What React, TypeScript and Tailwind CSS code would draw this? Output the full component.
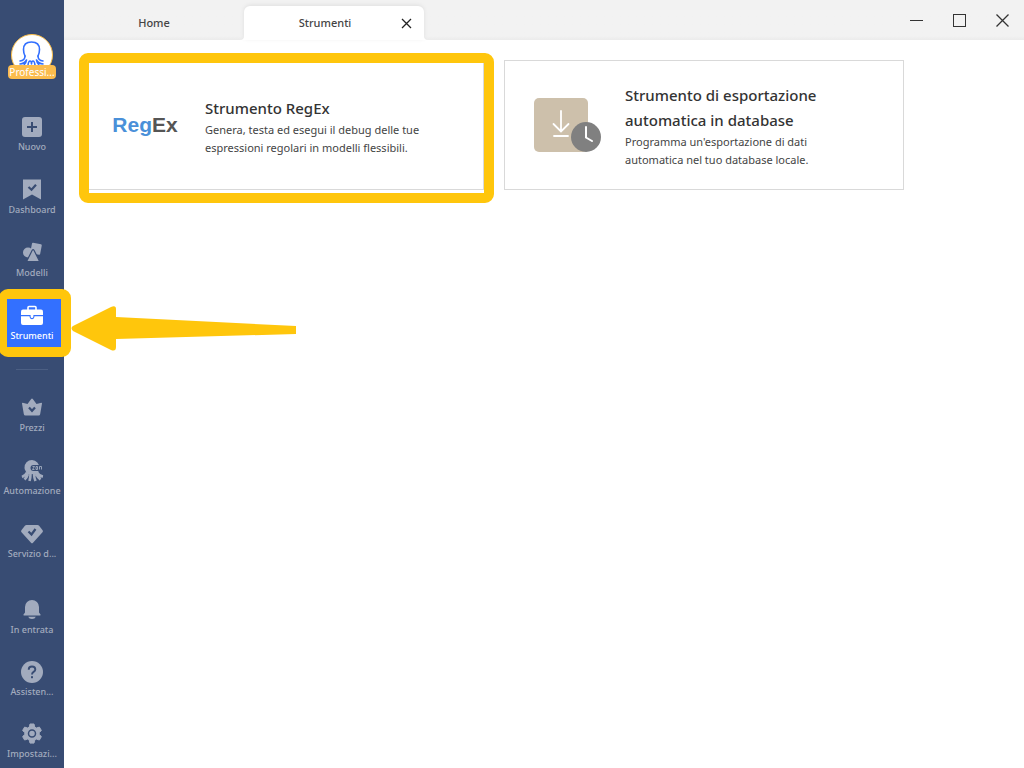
import React from 'react';
import { clsx } from 'clsx';

interface NavItem {
  label: string;
  icon: React.ReactNode;
  active?: boolean;
}

function Icon({ children }: { children: React.ReactNode }) {
  return (
    <svg width="24" height="24" viewBox="0 0 24 24" fill="currentColor" aria-hidden="true">
      {children}
    </svg>
  );
}

const NAVY = '#384c73';

const mainItems: NavItem[] = [
  {
    label: 'Nuovo',
    icon: (
      <Icon>
        <rect x="2" y="2" width="20" height="20" rx="3" />
        <path d="M12 7v10M7 12h10" stroke={NAVY} strokeWidth="2" />
      </Icon>
    ),
  },
  {
    label: 'Dashboard',
    icon: (
      <Icon>
        <path d="M3 1.500h18v20l-9-5-9 5z" />
        <path d="M8.500 9l3 2.800 4.500-5" fill="none" stroke={NAVY} strokeWidth="2.200" />
      </Icon>
    ),
  },
  {
    label: 'Modelli',
    icon: (
      <Icon>
        <rect x="11" y="2.500" width="10" height="10.500" rx="1" transform="rotate(11 16 8)" />
        <circle cx="8" cy="11.500" r="5" />
        <path d="M12.200 9.300q.9-1.400 1.800 0l5 10q.6 1.300-.8 1.300H8q-1.400 0-.8-1.300z" stroke={NAVY} strokeWidth="1.200" />
      </Icon>
    ),
  },
  {
    label: 'Strumenti',
    active: true,
    icon: (
      <Icon>
        <path d="M8 6V3.500q0-1 1-1h6q1 0 1 1V6" fill="none" stroke="currentColor" strokeWidth="1.600" />
        <path d="M3 5.500h18q2 0 2 2V11H1V7.500q0-2 2-2z" />
        <path d="M1 12.200h8.500q.3 3 2.500 3t2.500-3H23V19q0 2-2 2H3q-2 0-2-2z" />
        <path d="M10.600 11h2.800v1.500q0 1.500-1.400 1.500t-1.400-1.500z" />
      </Icon>
    ),
  },
];

const productItems: NavItem[] = [
  {
    label: 'Prezzi',
    icon: (
      <Icon>
        <path d="M12 2.500q.5 0 .8.500l3.700 5 4.800-1.300q.9 0 .7.900L20.200 18q-.2 1.500-1.700 1.500h-13q-1.500 0-1.700-1.500L2 7.600q-.2-.9.700-.9L7.500 8l3.700-5q.3-.5.8-.5z" />
        <path d="M9 11.500l3 3.300 3-3.300" fill="none" stroke={NAVY} strokeWidth="2.200" />
      </Icon>
    ),
  },
  {
    label: 'Automazione',
    icon: (
      <Icon>
        <path d="M12 1a7.500 7.500 0 0 1 7.300 8c0 2-1.300 3.500-1.300 6H6.500c0-2.500-2-4-2-6A7.500 7.500 0 0 1 12 1z" />
        <path d="M7 13.500q-1.500 3-5 4.500M8 15q-1 3-3.500 5.500M10.500 15q0 3.500-1 7M14 15q.2 4 1.500 7M16 15q1.500 3 4.500 5.500M17 13.500q2 3.500 6 4" fill="none" stroke="currentColor" strokeWidth="2.600" />
        <rect x="10.500" y="6" width="13" height="6" rx="3" fill={NAVY} />
        <path d="M12.500 7.500h2l-2 3h2M16 7.500v3h1.500v-3zM19.500 10.500v-3h2v3" fill="none" stroke="currentColor" strokeWidth="0.900" />
      </Icon>
    ),
  },
  {
    label: 'Servizio d...',
    icon: (
      <Icon>
        <path d="M6.500 3h11q1 0 1.600.8l3.500 4.500q.8 1-.1 2L13 20.800q-1 1-2 0L1.500 10.300q-.9-1-.1-2l3.500-4.500Q5.500 3 6.500 3z" />
        <path d="M8.500 9.500l3 3L15.500 7" fill="none" stroke={NAVY} strokeWidth="2.200" />
      </Icon>
    ),
  },
];

const footerItems: NavItem[] = [
  {
    label: 'In entrata',
    icon: (
      <Icon>
        <path d="M12 2a7 7 0 0 1 7 7v5.500l1.500 2q.5 1-.6 1H4.100q-1.100 0-.6-1l1.500-2V9a7 7 0 0 1 7-7z" />
        <path d="M8.200 18.700h7.600Q15 21 12 21t-3.800-2.300z" />
      </Icon>
    ),
  },
  {
    label: 'Assisten...',
    icon: (
      <Icon>
        <circle cx="12" cy="12" r="11" />
        <path d="M8.700 9.700Q8.700 6.500 12 6.500t3.300 2.900q0 1.400-1.700 2.500-1.600 1-1.600 2.600" fill="none" stroke={NAVY} strokeWidth="1.900" />
        <rect x="11" y="16.200" width="2" height="2" fill={NAVY} />
      </Icon>
    ),
  },
  {
    label: 'Impostazi...',
    icon: (
      <Icon>
        <path d="M10 2h4l.7 3 1.700 1 3-.9 2 3.400-2.200 2.100v1.900l2.200 2.100-2 3.400-3-.9-1.700 1-.7 3h-4l-.7-3-1.700-1-3 .9-2-3.400 2.200-2.100v-1.900L2.600 8.500l2-3.400 3 .9 1.700-1z" stroke="currentColor" strokeLinejoin="round" />
        <circle cx="12" cy="11.500" r="3.500" fill="none" stroke={NAVY} strokeWidth="1.500" />
      </Icon>
    ),
  },
];

function NavButton({ item }: { item: NavItem }) {
  return (
    <button
      className={clsx(
        'relative flex w-full flex-col items-center',
        item.active ? 'text-white' : 'text-[#a2abbe]'
      )}
    >
      {item.active && (
        <span className="absolute -top-[15px] -right-[7px] -bottom-[14px] -left-px rounded-[9px] border-[10px] border-l-[8px] border-[#ffc60c] bg-[#3370ff]" />
      )}
      <span className="relative">{item.icon}</span>
      <span className="relative text-[9px] leading-[15px] font-medium whitespace-nowrap">{item.label}</span>
    </button>
  );
}

function NavGroup({ items, className }: { items: NavItem[]; className?: string }) {
  return (
    <div className={clsx('flex flex-col', className)}>
      {items.map((item) => (
        <NavButton key={item.label} item={item} />
      ))}
    </div>
  );
}

function Sidebar() {
  return (
    <aside className="relative z-10 w-16 shrink-0 bg-[#384c73] pt-[34px]">
      <div className="flex flex-col items-center">
        <div className="h-[42px] w-[42px] overflow-hidden rounded-full border border-[#fbbf4c] bg-white">
          <svg width="40" height="40" viewBox="0 0 40 40" fill="none" stroke="#3370ff" strokeWidth="1.600" strokeLinecap="round" strokeLinejoin="round" aria-hidden="true">
            <path d="M13 21q-1.500-3-1.500-6.500Q11.500 7 19.500 7t8 7.500q0 3.500-1.500 6.500" />
            <path d="M13 21q0 4.500-5 5M26 21q0 4.500 5 5M8 29q4.500-.5 6.500-4-.5 3-2.500 5M31 29q-4.500-.5-6.500-4 .5 3 2.500 5M16 30q.5-4 2-4t1.500 3q0-3 1.500-3t2 4" />
          </svg>
        </div>
        <span className="-mt-[11px] w-12 rounded bg-[#fbbc4d] text-center text-[10px] leading-[14px] text-white">
          Professi...
        </span>
      </div>
      <nav className="pt-9">
        <NavGroup items={mainItems} className="gap-6" />
        <hr className="mx-4 my-[26px] border-[#4c5f83]" />
        <NavGroup items={productItems} className="gap-6" />
        <NavGroup items={footerItems} className="mt-[37px] gap-[23px]" />
      </nav>
    </aside>
  );
}

function TitleBar() {
  return (
    <header className="flex h-10 items-end justify-between bg-linear-to-b from-[#f2f2f2] from-90% to-[#ebebeb] text-[11px] font-medium text-[#444]">
      <div className="flex items-end" role="tablist">
        <button role="tab" aria-selected="false" className="h-[34px] w-[180px]">
          Home
        </button>
        <div className="relative flex h-[34px] w-[180px] items-center justify-center rounded-t-md bg-white shadow-[0_-1px_4px_#00000014]">
          <svg className="absolute bottom-0 -left-1" width="4" height="4" aria-hidden="true">
            <path d="M4 0v4H0q4 0 4-4z" fill="#fff" />
          </svg>
          <svg className="absolute -right-1 bottom-0" width="4" height="4" aria-hidden="true">
            <path d="M0 0v4h4Q0 4 0 0z" fill="#fff" />
          </svg>
          <button role="tab" aria-selected="true" className="h-full w-full pr-[18px]">
            Strumenti
          </button>
          <button aria-label="Chiudi scheda" className="absolute right-3 text-[#222]">
            <svg width="11" height="11" viewBox="0 0 11 11" stroke="currentColor" strokeWidth="1.300" aria-hidden="true">
              <path d="M1 1l9 9M10 1l-9 9" />
            </svg>
          </button>
        </div>
      </div>
      <div className="flex h-10 items-center gap-[30px] pr-[15px] text-[#333]">
        <button aria-label="Riduci a icona">
          <svg width="13" height="13" viewBox="0 0 13 13" stroke="currentColor" aria-hidden="true">
            <path d="M0 6.500h13" />
          </svg>
        </button>
        <button aria-label="Ingrandisci">
          <svg width="13" height="13" viewBox="0 0 13 13" fill="none" stroke="currentColor" aria-hidden="true">
            <rect x="0.500" y="0.500" width="12" height="12" />
          </svg>
        </button>
        <button aria-label="Chiudi">
          <svg width="13" height="13" viewBox="0 0 13 13" stroke="currentColor" strokeWidth="1.300" aria-hidden="true">
            <path d="M.5.5l12 12M12.500.5l-12 12" />
          </svg>
        </button>
      </div>
    </header>
  );
}

interface ToolCardProps {
  logo: React.ReactNode;
  title: string;
  text: string;
  highlighted?: boolean;
}

function ToolCard({ logo, title, text, highlighted }: ToolCardProps) {
  return (
    <button className="relative flex h-[130px] w-[400px] items-center border border-[#d9d9d9] bg-white text-left">
      <span className="flex w-[120px] shrink-0 justify-center">{logo}</span>
      <span className="w-[230px] pt-0.5">
        <span className="block text-[15px] leading-[25px] font-medium text-[#333]">{title}</span>
        <span className="block text-[11px] leading-[18px] text-[#444]">{text}</span>
      </span>
      {highlighted && (
        <span className="absolute -top-2 -right-[11px] -bottom-[14px] -left-[6px] rounded-[9px] border-[10px] border-[#ffc60c]" />
      )}
    </button>
  );
}

function ExportLogo() {
  return (
    <svg className="ml-1.5" width="68" height="56" viewBox="0 0 68 56" fill="none" strokeLinecap="round" aria-hidden="true">
      <rect x="0" y="1" width="54" height="54" rx="5" fill="#cdc0ab" />
      <path d="M27 14v20M19.500 27l7.500 7.500 7.500-7.500M20 39h14" stroke="#fff" strokeWidth="1.800" />
      <circle cx="52" cy="40" r="15" fill="#808080" />
      <path d="M52 30v10.500l6 3.500" stroke="#fff" strokeWidth="2" />
    </svg>
  );
}

function Arrow() {
  return (
    <svg className="pointer-events-none absolute top-[305px] left-[71px] z-20" width="226" height="46" viewBox="0 0 226 46" fill="#ffc60c" aria-hidden="true">
      <path d="M2 21L40 2q5-2 5 2v8l180 9v8L45 34v8q0 5-5 3L2 26q-3-3 0-5z" />
    </svg>
  );
}

export default function App() {
  return (
    <div className="relative flex min-h-screen bg-white font-['Noto_Sans','Open_Sans',sans-serif]">
      <Sidebar />
      <div className="min-w-0 flex-1">
        <TitleBar />
        <main className="flex flex-wrap gap-5 p-5">
          <ToolCard
            highlighted
            logo={
              <span className="font-['Liberation_Sans',sans-serif] text-[21px] font-bold text-[#4a90d9]">
                Reg<span className="text-[#555]">Ex</span>
              </span>
            }
            title="Strumento RegEx"
            text="Genera, testa ed esegui il debug delle tue espressioni regolari in modelli flessibili."
          />
          <ToolCard
            logo={<ExportLogo />}
            title="Strumento di esportazione automatica in database"
            text="Programma un'esportazione di dati automatica nel tuo database locale."
          />
        </main>
      </div>
      <Arrow />
    </div>
  );
}
